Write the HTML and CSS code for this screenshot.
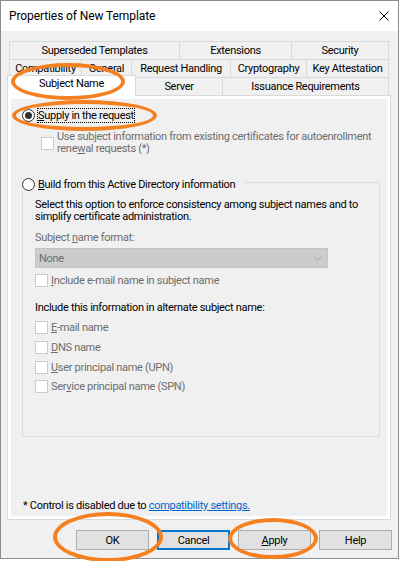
FILE: index.html
```html
<!DOCTYPE html>
<html>
<head>
<meta charset="utf-8">
<link rel="stylesheet" href="styles.css">
</head>
<body>
<div class="window">
  <div class="titlebar">
    <span class="title">Properties of New Template</span>
    <svg class="close" width="10" height="10" viewBox="0 0 10 10"><path d="M0.5 0.5 L9.5 9.5 M9.5 0.5 L0.5 9.5" stroke="#000" stroke-width="1" fill="none"/></svg>
  </div>
  <div class="client">
    <div class="tabs">
      <div class="tabrow row1">
        <div class="tab first">Superseded Templates</div>
        <div class="tab">Extensions</div>
        <div class="tab">Security</div>
      </div>
      <div class="tabrow row2">
        <div class="tab first">Compatibility</div>
        <div class="tab">General</div>
        <div class="tab">Request Handling</div>
        <div class="tab">Cryptography</div>
        <div class="tab">Key Attestation</div>
      </div>
      <div class="tabrow row3">
        <div class="tab selected">Subject Name</div>
        <div class="tab">Server</div>
        <div class="tab">Issuance Requirements</div>
      </div>
    </div>
    <div class="panel">
      <div class="page">
        <div class="radio-row opt1">
          <span class="radio checked"></span>
          <span class="focus"><u>S</u>upply in the request</span>
        </div>
        <div class="check-row sub">
          <span class="check"></span>
          <span class="dim multi">Use subject information from existing certificates for autoenrollment<br>rene<u>w</u>al requests (*)</span>
        </div>
        <fieldset class="group">
          <legend class="group-legend"><span class="radio-row"><span class="radio"></span><span><u>B</u>uild from this Active Directory information</span></span></legend>
          <div class="group-body">
            <p class="text multi">Select this option to enforce consistency among subject names and to<br>simplify certificate administration.</p>
            <p class="text dim label">Subject <u>n</u>ame format:</p>
            <div class="combo"><span>None</span><svg width="9" height="5" viewBox="0 0 9 5"><path d="M0.5 0.5 L4.5 4.5 L8.5 0.5" stroke="#a6a6a6" fill="none"/></svg></div>
            <div class="check-row single"><span class="check"></span><span class="dim"><u>I</u>nclude e-mail name in subject name</span></div>
            <p class="text alt">Include this information in alternate subject name:</p>
            <div class="alt-list">
              <div class="check-row item"><span class="check"></span><span class="dim"><u>E</u>-mail name</span></div>
              <div class="check-row item"><span class="check"></span><span class="dim"><u>D</u>NS name</span></div>
              <div class="check-row item"><span class="check"></span><span class="dim"><u>U</u>ser principal name (UPN)</span></div>
              <div class="check-row item"><span class="check"></span><span class="dim">Ser<u>v</u>ice principal name (SPN)</span></div>
            </div>
          </div>
        </fieldset>
        <p class="foot">* Control is disabled due to <a class="link">compatibility settings.</a></p>
      </div>
    </div>
    <div class="buttons">
      <div class="btn">OK</div>
      <div class="btn default">Cancel</div>
      <div class="btn"><u>A</u>pply</div>
      <div class="btn">Help</div>
    </div>
  </div>
  <div class="mark m1"></div>
  <div class="mark m2"></div>
  <div class="mark m3"></div>
  <div class="mark m4"></div>
</div>
</body>
</html>
```

FILE: styles.css
```css
html, body {
  margin: 0;
  padding: 0;
  background: #ffffff;
}
body {
  width: 401px;
  height: 561px;
  overflow: hidden;
}
.window {
  position: relative;
  box-sizing: border-box;
  width: 399px;
  height: 559px;
  border: 1px solid #8c8c8c;
  background: #f0f0f0;
  display: flex;
  flex-direction: column;
  font-family: Roboto, "Liberation Sans", sans-serif;
  font-size: 11px;
  letter-spacing: -0.3px;
  color: #000;
}
.titlebar {
  height: 30px;
  background: #ffffff;
  display: flex;
  align-items: center;
  justify-content: space-between;
  padding: 0 9px 0 8px;
}
.title {
  font-size: 12px;
  letter-spacing: -0.1px;
}
.close {
  display: block;
}
.client {
  padding: 10px 0 0 6px;
  display: flex;
  flex-direction: column;
}
.tabs {
  display: flex;
  flex-direction: column;
}
.tabrow {
  display: grid;
  grid-template-rows: 18px;
}
.row1 {
  margin-left: 2px;
  grid-template-columns: 171px 112px 97px;
}
.row2 {
  margin-left: 2px;
  grid-template-columns: 73px 50px 99px 76px 82px;
}
.row3 {
  grid-template-columns: 129px 87px 166px;
}
.tab {
  box-sizing: border-box;
  height: 18px;
  border-top: 1px solid #d9d9d9;
  border-right: 1px solid #d9d9d9;
  background: #f0f0f0;
  text-align: center;
  line-height: 17px;
  white-space: nowrap;
  overflow: hidden;
}
.tab.first {
  border-left: 1px solid #d9d9d9;
}
.tab.selected {
  position: relative;
  z-index: 1;
  height: 21px;
  margin-top: -2px;
  border-left: 1px solid #d9d9d9;
  background: #ffffff;
  line-height: 16px;
}
.panel {
  box-sizing: border-box;
  width: 384px;
  height: 425px;
  border: 1px solid #d9d9d9;
  background: #ffffff;
  padding: 3px;
}
.page {
  box-sizing: border-box;
  height: 417px;
  background: #f0f0f0;
  padding: 9px 0 4px 0;
  display: flex;
  flex-direction: column;
}
.radio-row {
  display: flex;
  align-items: center;
  height: 15px;
}
.opt1 {
  margin-left: 11px;
}
.radio {
  box-sizing: border-box;
  width: 13px;
  height: 13px;
  border: 1px solid #333333;
  border-radius: 50%;
  background: #ffffff;
  margin-right: 3px;
  display: flex;
  align-items: center;
  justify-content: center;
  flex: none;
}
.radio.checked::after {
  content: "";
  width: 7px;
  height: 7px;
  border-radius: 50%;
  background: #333333;
}
.focus {
  display: inline-block;
  line-height: 13px;
  outline: 1px dotted #000;
}
.check-row {
  display: flex;
  align-items: center;
}
.check {
  box-sizing: border-box;
  width: 13px;
  height: 13px;
  border: 1px solid #cccccc;
  background: #ffffff;
  margin-right: 3px;
  flex: none;
}
.sub {
  margin-top: 8px;
  margin-left: 30px;
}
.multi {
  line-height: 12px;
  white-space: nowrap;
}
.dim {
  color: #6d6d6d;
}
.group {
  box-sizing: border-box;
  width: 358px;
  margin: 17px 0 0 11px;
  padding: 0;
  border: 1px solid #dcdcdc;
  min-width: 0;
}
.group-legend {
  padding: 5px 9px 0 0;
  margin-left: -1px;
}
.group-body {
  padding: 7px 0 39px 12px;
  display: flex;
  flex-direction: column;
}
.text {
  margin: 0;
  line-height: 12px;
}
.label {
  margin-top: 9px;
}
.combo {
  box-sizing: border-box;
  width: 293px;
  height: 20px;
  margin-top: 4px;
  background: #cccccc;
  border: 1px solid #c4c4c4;
  color: #6d6d6d;
  display: flex;
  align-items: center;
  justify-content: space-between;
  padding: 0 5px 0 3px;
}
.combo svg {
  display: block;
}
.single {
  margin-top: 6px;
  height: 13px;
}
.alt {
  margin-top: 15px;
}
.alt-list {
  margin-top: 4px;
  display: flex;
  flex-direction: column;
}
.item {
  height: 19.7px;
}
.foot {
  margin: auto 0 0 12px;
  line-height: 12px;
}
.link {
  color: #0066cc;
  text-decoration: underline;
}
.buttons {
  display: flex;
  justify-content: flex-end;
  gap: 8px;
  margin-top: 10px;
  padding-right: 6px;
}
.btn {
  box-sizing: border-box;
  width: 73px;
  height: 20px;
  border: 1px solid #adadad;
  background: #e1e1e1;
  display: flex;
  align-items: center;
  justify-content: center;
}
.btn.default {
  border: 2px solid #0078d7;
}
.mark {
  position: absolute;
  box-sizing: border-box;
  border: 4px solid #f5801f;
  border-radius: 50%;
  z-index: 5;
}
.m1 {
  left: 10px;
  top: 62px;
  width: 114px;
  height: 37px;
}
.m2 {
  left: 11px;
  top: 99px;
  width: 145px;
  height: 31px;
}
.m3 {
  left: 52px;
  top: 511px;
  width: 110px;
  height: 50px;
}
.m4 {
  left: 227px;
  top: 517px;
  width: 90px;
  height: 41px;
}
```
